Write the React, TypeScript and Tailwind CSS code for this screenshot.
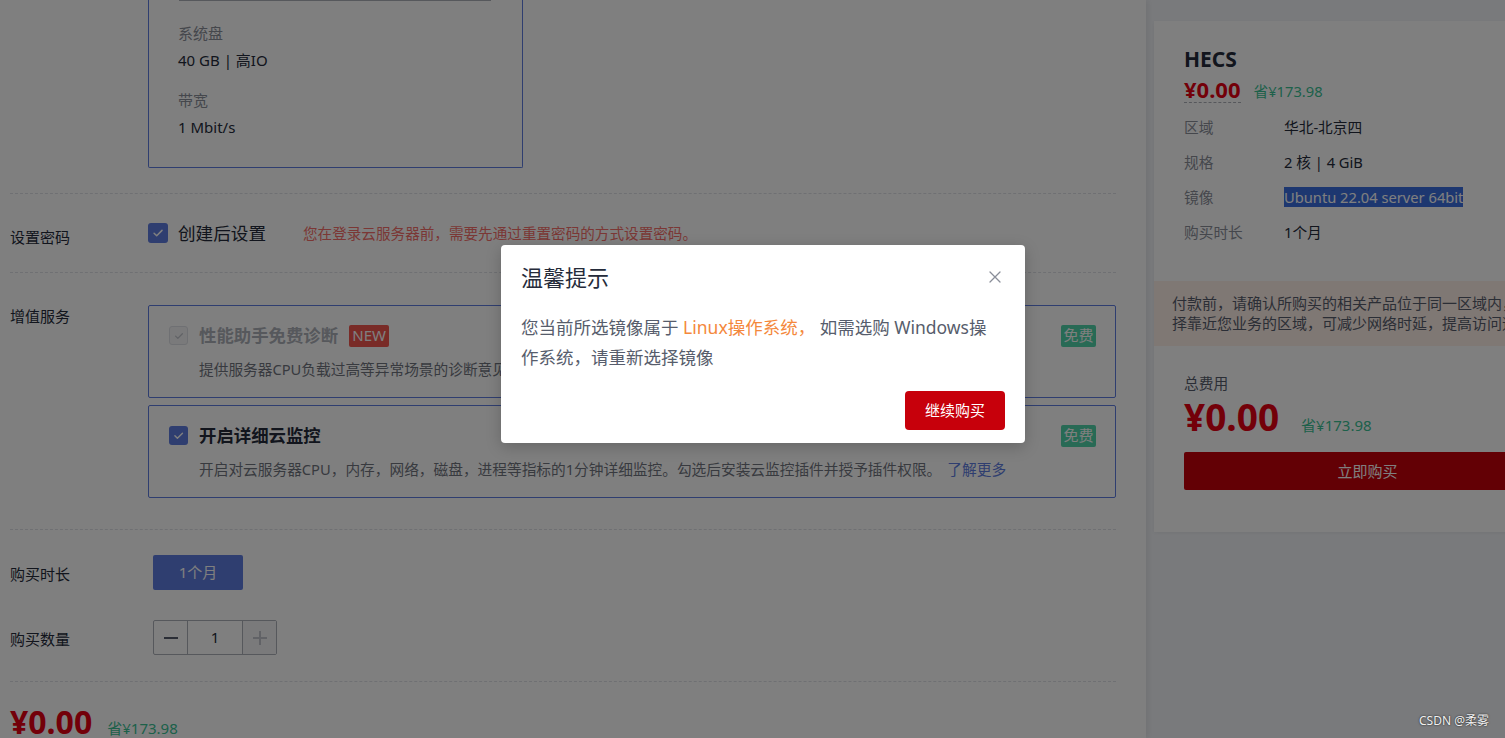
import type { ReactNode } from "react";

const font = "font-['Noto_Sans','Noto_Sans_CJK_SC',sans-serif]";

function Check({ size, disabled }: { size: number; disabled?: boolean }) {
  return (
    <span
      className={
        disabled
          ? "inline-flex shrink-0 items-center justify-center rounded-[3px] border border-[#dfe1e6] bg-[#f5f5f6]"
          : "inline-flex shrink-0 items-center justify-center rounded-[3px] bg-[#5e7ce0]"
      }
      style={{ width: size, height: size }}
    >
      <svg viewBox="0 0 16 16" className="h-[70%] w-[70%]" fill="none">
        <path
          d="M3.5 8.2l3 3L12.6 5"
          stroke={disabled ? "#c2c5cc" : "#ffffff"}
          strokeWidth="1.7"
          strokeLinecap="round"
          strokeLinejoin="round"
        />
      </svg>
    </span>
  );
}

function Divider() {
  return <div className="h-0 w-[1106px] border-t border-dashed border-[#dfe1e6]" />;
}

function Label({ children, className = "" }: { children?: ReactNode; className?: string }) {
  return (
    <div className={"w-[138px] shrink-0 text-[15px] leading-[20px] text-[#252b3a] " + className}>
      {children}
    </div>
  );
}

function ServiceCard({
  title,
  desc,
  checked,
  badge,
  link,
  className = "",
}: {
  title: string;
  desc: string;
  checked: boolean;
  badge?: boolean;
  link?: boolean;
  className?: string;
}) {
  return (
    <div
      className={
        "flex w-[968px] justify-between rounded-[2px] border border-[#5e7ce0] pb-[18px] pl-[20px] pr-[19px] pt-[20px] " +
        className
      }
    >
      <div className="flex flex-col">
        <div className="flex h-[19px] items-center gap-[11px]">
          <Check size={19} disabled={!checked} />
          <span
            className={
              checked
                ? "text-[17.4px] font-bold text-[#252b3a]"
                : "text-[17.4px] font-bold text-[#adb0b8]"
            }
          >
            {title}
          </span>
          {badge ? (
            <span className="flex h-[22px] w-[40px] items-center justify-center rounded-[2px] bg-[#f2564f] text-[15px] leading-none text-white">
              NEW
            </span>
          ) : null}
        </div>
        <p className="mt-[14px] h-[20px] pl-[30px] text-[14.7px] leading-[20px] text-[#71757f]">
          {desc}
          {link ? <span className="ml-[6px] text-[#5e7ce0]">了解更多</span> : null}
        </p>
      </div>
      <div className="flex h-[19px] items-center">
        <span className="flex h-[22px] w-[35px] items-center justify-center rounded-[2px] bg-[#50d4ab] text-[15px] leading-none text-white">
          免费
        </span>
      </div>
    </div>
  );
}

function InfoRow({ label, children }: { label: string; children: ReactNode }) {
  return (
    <div className="flex h-[20px] items-center text-[14.7px] leading-[20px]">
      <span className="w-[100px] shrink-0 text-[#8a8e99]">{label}</span>
      <span className="text-[#252b3a]">{children}</span>
    </div>
  );
}

export default function App() {
  return (
    <div className={"relative flex h-[738px] w-[1505px] overflow-hidden bg-[#f3f5f9] " + font}>
      {/* main config column */}
      <main className="relative z-10 h-[738px] w-[1146px] shrink-0 bg-white pl-[10px] shadow-[2px_0_6px_rgba(0,0,0,0.08)]">
        <div className="flex">
          <Label />
          <div className="w-[375px] rounded-b-[2px] border-x border-b border-[#5e7ce0] pb-[30px]">
            <div className="ml-[30px] mr-[31px] h-px bg-[#adb0b8]" />
            <div className="pl-[29px] text-[15px] leading-[20px]">
              <div className="mt-[22px] text-[#8a8e99]">系统盘</div>
              <div className="mt-[7px] text-[#252b3a]">40 GB | 高IO</div>
              <div className="mt-[20px] text-[#8a8e99]">带宽</div>
              <div className="mt-[7px] text-[#252b3a]">1 Mbit/s</div>
            </div>
          </div>
        </div>

        <div className="mt-[25px]">
          <Divider />
        </div>

        <div className="flex h-[78px] items-start pt-[29px]">
          <Label className="pt-[4px]">设置密码</Label>
          <div className="flex h-[20px] items-center">
            <Check size={20} />
            <span className="ml-[10px] text-[17.6px] leading-[20px] text-[#252b3a]">创建后设置</span>
            <span className="ml-[37px] text-[14.6px] leading-[20px] text-[#f66f6a]">
              您在登录云服务器前，需要先通过重置密码的方式设置密码。
            </span>
          </div>
        </div>

        <Divider />

        <div className="flex h-[256px] items-start pt-[32px]">
          <Label className="pt-[1px]">增值服务</Label>
          <div className="flex flex-col">
            <ServiceCard
              title="性能助手免费诊断"
              desc="提供服务器CPU负载过高等异常场景的诊断意见，帮助您快速定位并解决性能问题。"
              checked={false}
              badge
            />
            <ServiceCard
              className="mt-[7px]"
              title="开启详细云监控"
              desc="开启对云服务器CPU，内存，网络，磁盘，进程等指标的1分钟详细监控。勾选后安装云监控插件并授予插件权限。"
              checked
              link
            />
          </div>
        </div>

        <Divider />

        <div className="h-[151px] pt-[25px]">
          <div className="flex h-[35px] items-center">
            <Label className="pt-[2px]">购买时长</Label>
            <button
              type="button"
              className="ml-[5px] h-[35px] w-[90px] rounded-[2px] bg-[#5e7ce0] text-[15px] text-white"
            >
              1个月
            </button>
          </div>
          <div className="mt-[30px] flex h-[35px] items-center">
            <Label className="pt-[2px]">购买数量</Label>
            <div className="ml-[5px] flex h-[35px] w-[124px] rounded-[2px] border border-[#adb0b8]">
              <span className="flex w-[34px] items-center justify-center border-r border-[#adb0b8]">
                <span className="h-[2px] w-[14px] bg-[#575d6c]" />
              </span>
              <span className="flex flex-1 items-center justify-center text-[15px] text-[#252b3a]">1</span>
              <span className="relative flex w-[34px] items-center justify-center border-l border-[#adb0b8] bg-[#f5f5f6]">
                <span className="h-[2px] w-[14px] bg-[#c2c5cc]" />
                <span className="absolute h-[14px] w-[2px] bg-[#c2c5cc]" />
              </span>
            </div>
          </div>
        </div>

        <Divider />

        <div className="flex items-baseline pt-[20px]">
          <span className="text-[32px] font-bold leading-[40px] text-[#e60012]">¥0.00</span>
          <span className="ml-[15px] text-[15px] text-[#3ac295]">省¥173.98</span>
        </div>
      </main>

      {/* order summary */}
      <aside className="min-w-0 flex-1 overflow-hidden pl-[8px] pt-[21px]">
        <div className="w-[427px] bg-white pb-[42px] shadow-[0_1px_4px_rgba(0,0,0,0.06)]">
          <div className="px-[30px] pb-[39px] pt-[24px]">
            <div className="text-[21px] font-bold leading-[28px] text-[#252b3a]">HECS</div>
            <div className="mt-[4px] flex items-center">
              <span className="border-b border-dashed border-[#adb0b8] text-[22px] font-bold leading-[25px] text-[#e60012]">
                ¥0.00
              </span>
              <span className="ml-[13px] mt-[3px] text-[14.7px] text-[#3ac295]">省¥173.98</span>
            </div>
            <div className="mt-[14px] flex flex-col gap-[15px]">
              <InfoRow label="区域">华北-北京四</InfoRow>
              <InfoRow label="规格">2 核 | 4 GiB</InfoRow>
              <InfoRow label="镜像">
                <span className="bg-[#3b6fe0] text-white">Ubuntu 22.04 server 64bit</span>
              </InfoRow>
              <InfoRow label="购买时长">1个月</InfoRow>
            </div>
          </div>
          <div className="whitespace-nowrap bg-[#fff0e8] pb-[13px] pl-[18px] pt-[12px] text-[15px] leading-[20px] text-[#575d6c]">
            付款前，请确认所购买的相关产品位于同一区域内，不同区域的产品内网不互通，建议选
            <br />
            择靠近您业务的区域，可减少网络时延，提高访问速度。
          </div>
          <div className="px-[30px] pt-[27px]">
            <div className="text-[14.7px] leading-[20px] text-[#575d6c]">总费用</div>
            <div className="mt-[2px] flex items-baseline">
              <span className="text-[37px] font-bold leading-[44px] text-[#e60012]">¥0.00</span>
              <span className="ml-[22px] text-[15px] text-[#3ac295]">省¥173.98</span>
            </div>
            <button
              type="button"
              className="mt-[13px] h-[38px] w-[367px] rounded-[2px] bg-[#c7000b] text-[15px] text-white"
            >
              立即购买
            </button>
          </div>
        </div>
      </aside>

      {/* mask */}
      <div className="absolute inset-0 z-20 bg-black/50" />

      {/* dialog */}
      <div className="absolute left-[501px] top-[245px] z-30 h-[198px] w-[524px] rounded-[4px] bg-white px-[20px] pt-[17px] shadow-[0_4px_16px_rgba(0,0,0,0.2)]">
        <div className="flex h-[30px] items-center justify-between">
          <span className="text-[22px] leading-[30px] text-[#252b3a]">温馨提示</span>
          <svg viewBox="0 0 12 12" className="mr-[4px] h-[12px] w-[12px]" fill="none">
            <path d="M1 1l10 10M11 1L1 11" stroke="#8a8e99" strokeWidth="1.3" strokeLinecap="round" />
          </svg>
        </div>
        <p className="mt-[20px] text-[17.5px] leading-[30px] text-[#575d6c]">
          您当前所选镜像属于 <span className="text-[#f4883c]">Linux操作系统，</span> 如需选购 Windows操
          <br />
          作系统，请重新选择镜像
        </p>
        <div className="mt-[19px] flex justify-end">
          <button
            type="button"
            className="h-[39px] w-[100px] rounded-[4px] bg-[#c7000b] text-[15px] text-white"
          >
            继续购买
          </button>
        </div>
      </div>

      <div className="absolute bottom-[8px] right-[16px] z-30 text-[12px] text-[#f0f0f0] [text-shadow:0_0_2px_rgba(0,0,0,0.9)]">
        CSDN @柔雾
      </div>
    </div>
  );
}
